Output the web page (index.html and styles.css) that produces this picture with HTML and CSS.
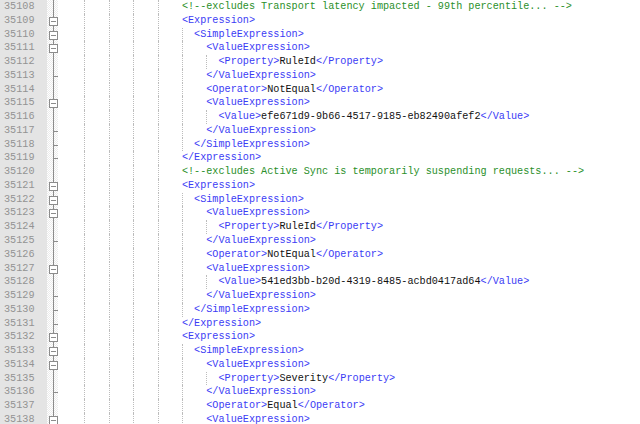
FILE: index.html
```html
<!DOCTYPE html>
<html lang="en">
<head>
  <meta charset="UTF-8">
  <title>rules.xml</title>
  <link rel="stylesheet" href="styles.css">
</head>
<body>

  <div class="editor">
    <div class="numeros" id="numeros"></div>
    <div class="dobras" id="dobras"></div>
    <div class="codigo" id="codigo"></div>
  </div>

  <script>
    // [indentacao, texto, marcador da dobra]
    const linhas = [
      [20, "<!--excludes Transport latency impacted - 99th percentile... -->", "l"],
      [20, "<Expression>", "b"],
      [22, "<SimpleExpression>", "b"],
      [24, "<ValueExpression>", "b"],
      [26, "<Property>RuleId</Property>", "l"],
      [24, "</ValueExpression>", "t"],
      [24, "<Operator>NotEqual</Operator>", "l"],
      [24, "<ValueExpression>", "b"],
      [26, "<Value>efe671d9-9b66-4517-9185-eb82490afef2</Value>", "l"],
      [24, "</ValueExpression>", "t"],
      [22, "</SimpleExpression>", "t"],
      [20, "</Expression>", "t"],
      [20, "<!--excludes Active Sync is temporarily suspending requests... -->", "l"],
      [20, "<Expression>", "b"],
      [22, "<SimpleExpression>", "b"],
      [24, "<ValueExpression>", "b"],
      [26, "<Property>RuleId</Property>", "l"],
      [24, "</ValueExpression>", "t"],
      [24, "<Operator>NotEqual</Operator>", "l"],
      [24, "<ValueExpression>", "b"],
      [26, "<Value>541ed3bb-b20d-4319-8485-acbd0417ad64</Value>", "l"],
      [24, "</ValueExpression>", "t"],
      [22, "</SimpleExpression>", "t"],
      [20, "</Expression>", "t"],
      [20, "<Expression>", "b"],
      [22, "<SimpleExpression>", "b"],
      [24, "<ValueExpression>", "b"],
      [26, "<Property>Severity</Property>", "l"],
      [24, "</ValueExpression>", "t"],
      [24, "<Operator>Equal</Operator>", "l"],
      [24, "<ValueExpression>", "b"]
    ];

    const numeros = document.getElementById("numeros");
    const dobras = document.getElementById("dobras");
    const codigo = document.getElementById("codigo");

    function span(classe, texto) {
      const s = document.createElement("span");
      s.className = classe;
      if (texto) s.textContent = texto;
      return s;
    }

    linhas.forEach(([ind, texto, marca], i) => {
      const num = document.createElement("div");
      num.textContent = 35108 + i;
      numeros.appendChild(num);

      const dobra = document.createElement("div");
      if (marca === "b") dobra.appendChild(span("caixa"));
      if (marca === "t") dobra.appendChild(span("risco"));
      dobras.appendChild(dobra);

      const linha = document.createElement("div");
      const recuo = span("sp");
      recuo.style.width = "4ch";
      linha.appendChild(recuo);
      for (let c = 4; c < ind; c += 4) {
        const guia = span("guia");
        guia.style.width = Math.min(4, ind - c) + "ch";
        linha.appendChild(guia);
      }
      if (texto.startsWith("<!--")) {
        linha.appendChild(span("com", texto));
      } else {
        texto.split(/(<[^>]+>)/).filter(Boolean).forEach(parte => {
          linha.appendChild(span(parte.startsWith("<") ? "tag" : "val", parte));
        });
      }
      codigo.appendChild(linha);
    });
  </script>
</body>
</html>
```

FILE: styles.css
```css
body {
  margin: 0;
  background: #fff;
  font-family: "Liberation Mono", "Courier New", monospace;
  font-size: 10.17px;
  overflow: hidden;
}

.editor {
  display: flex;
  height: 100vh;
}

.numeros {
  width: 47px;
  background: #e4e4e4;
  color: #939393;
}

.numeros div {
  height: 13.77px;
  line-height: 13.77px;
  padding-left: 4px;
}

.dobras {
  width: 11px;
  background:
    linear-gradient(#8c8c8c, #8c8c8c) 6px 0 / 1px 100% no-repeat,
    repeating-conic-gradient(#ebebeb 0 25%, #fff 0 50%) 0 0 / 2px 2px;
}

.dobras div {
  height: 13.77px;
  position: relative;
}

.caixa {
  position: absolute;
  left: 2px;
  top: 3px;
  width: 9px;
  height: 9px;
  box-sizing: border-box;
  border: 1px solid #8c8c8c;
  background: #fff;
}

.caixa::after {
  content: "";
  position: absolute;
  left: 1px;
  top: 3px;
  width: 5px;
  height: 1px;
  background: #8c8c8c;
}

.risco {
  position: absolute;
  left: 7px;
  top: 7px;
  width: 4px;
  height: 1px;
  background: #8c8c8c;
}

.codigo {
  flex: 1;
  padding-left: 2px;
}

.codigo div {
  height: 13.77px;
  line-height: 13.77px;
  white-space: pre;
}

.sp,
.guia {
  display: inline-block;
  height: 13.77px;
  vertical-align: top;
}

.guia {
  box-sizing: border-box;
  border-left: 1px dotted #bcbcbc;
}

.tag {
  color: #3b3bf5;
}

.com {
  color: #2a8f2a;
}

.val {
  color: #111;
}
```
